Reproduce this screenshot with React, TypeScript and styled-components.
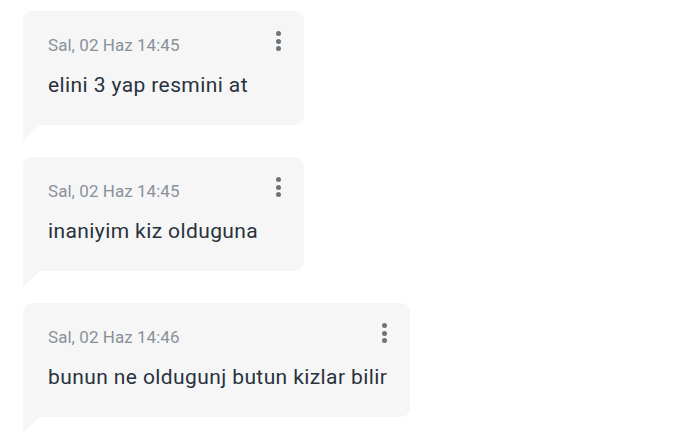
import React from "react";
import styled, { createGlobalStyle } from "styled-components";

const GlobalStyle = createGlobalStyle`
    html, body {
        margin: 0;
        padding: 0;
        background: #ffffff;
    }
    body {
        font-family: Roboto, "Noto Sans", Arial, sans-serif;
        -webkit-font-smoothing: antialiased;
    }
`;

interface Msg {
    id: number;
    date: string;
    text: string;
}

const messages: Msg[] = [
    { id: 1, date: "Sal, 02 Haz 14:45", text: "elini 3 yap resmini at" },
    { id: 2, date: "Sal, 02 Haz 14:45", text: "inaniyim kiz olduguna" },
    { id: 3, date: "Sal, 02 Haz 14:46", text: "bunun ne oldugunj butun kizlar bilir" },
];

const List = styled.div`
    display: flex;
    flex-direction: column;
    align-items: flex-start;
    gap: 16px;
    padding: 11px 0 0 23px;
`;

const Item = styled.div`
    display: flex;
    flex-direction: column;
    align-items: flex-start;
`;

const Bubble = styled.div`
    box-sizing: border-box;
    min-width: 281px;
    height: 114px;
    padding: 21px 23px 0 25px;
    background: #f6f6f6;
    border-radius: 9px 9px 9px 0;
    display: flex;
    flex-direction: column;
`;

// Little speech tail under the bottom-left corner
const Tail = styled.div`
    width: 17px;
    height: 16px;
    background: #f6f6f6;
    clip-path: polygon(0 0, 100% 0, 0 100%);
`;

const Header = styled.div`
    display: flex;
    align-items: center;
    justify-content: space-between;
    gap: 24px;
    height: 26px;
`;

const Date = styled.span`
    font-size: 17px;
    color: #89919a;
    letter-spacing: 0.05px;
`;

const Menu = styled.button`
    border: 0;
    background: none;
    padding: 0;
    margin: -8px 0 0 0;
    display: flex;
    flex-direction: column;
    gap: 2.5px;
    cursor: pointer;

    span {
        width: 5px;
        height: 5px;
        border-radius: 50%;
        background: #6b737c;
    }
`;

const Text = styled.div`
    margin-top: 15px;
    font-size: 21px;
    letter-spacing: 0.4px;
    color: #29323d;
    white-space: nowrap;
`;

const Message = ({ message }: { message: Msg }) => (
    <Item>
        <Bubble>
            <Header>
                <Date>{message.date}</Date>
                <Menu aria-label="menu">
                    <span />
                    <span />
                    <span />
                </Menu>
            </Header>
            <Text>{message.text}</Text>
        </Bubble>
        <Tail />
    </Item>
);

export default function App() {
    return (
        <>
            <GlobalStyle />
            <List>
                {messages.map((m) => (
                    <Message key={m.id} message={m} />
                ))}
            </List>
        </>
    );
}
